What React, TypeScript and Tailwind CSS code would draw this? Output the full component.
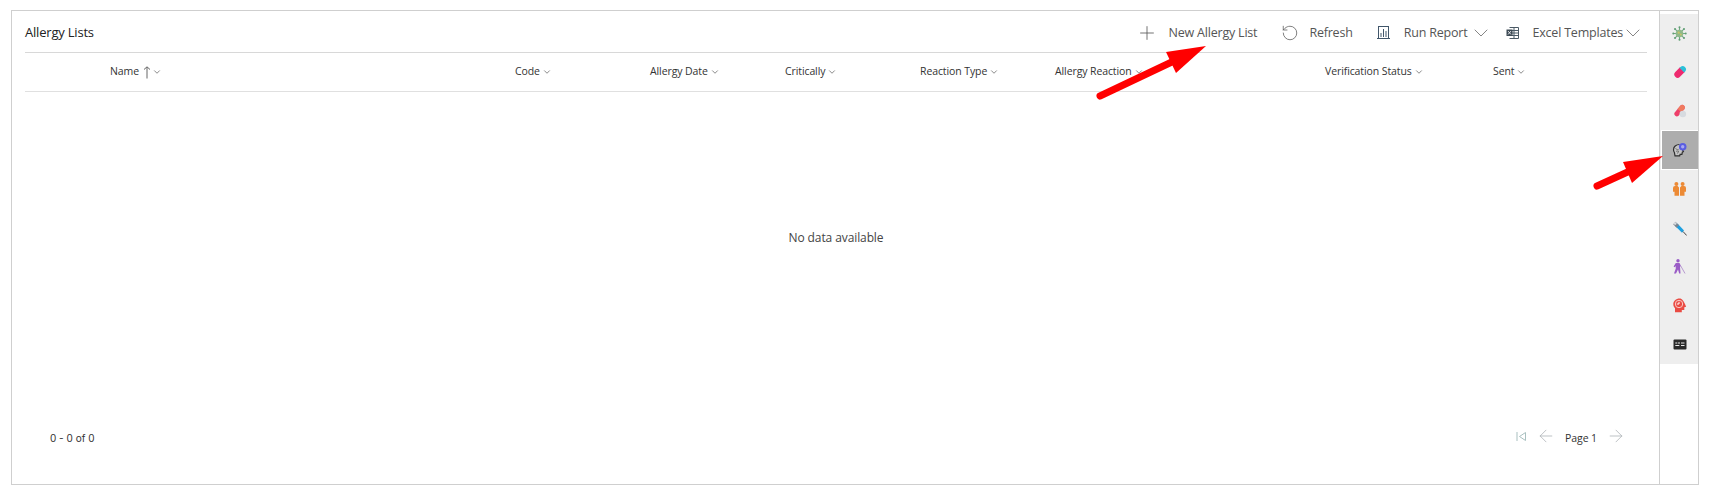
import { ArrowLeft, ArrowRight, ChevronDown, Plus, RotateCw } from "lucide-react";

const COLUMNS = [
  { label: "Code", width: "w-[135px]" },
  { label: "Allergy Date", width: "w-[135px]" },
  { label: "Critically", width: "w-[135px]" },
  { label: "Reaction Type", width: "w-[135px]" },
  { label: "Allergy Reaction", width: "w-[270px]" },
  { label: "Verification Status", width: "w-[168px]" },
  { label: "Sent", width: "w-[100px]" },
];

// ─── Sidebar icons ────────────────────────────────────────────────────────────

function VirusIcon() {
  return (
    <svg width="15" height="15" viewBox="0 0 15 15">
      <g stroke="#6fa883" strokeWidth="1.100">
        <path d="M7.500 1v13M1 7.500h13M2.900 2.900l9.200 9.200M12.100 2.900l-9.200 9.200" />
      </g>
      <g fill="#5f9e73">
        <circle cx="7.500" cy="1.300" r="1" />
        <circle cx="7.500" cy="13.700" r="1" />
        <circle cx="1.300" cy="7.500" r="1" />
        <circle cx="13.700" cy="7.500" r="1" />
        <circle cx="3" cy="3" r="1" />
        <circle cx="12" cy="3" r="1" />
        <circle cx="3" cy="12" r="1" />
        <circle cx="12" cy="12" r="1" />
      </g>
      <circle cx="7.500" cy="7.500" r="3.800" fill="#8fb98a" />
      <circle cx="6.700" cy="6.700" r="1.100" fill="#c9c46a" />
      <circle cx="8.800" cy="8.500" r=".9" fill="#c9c46a" />
    </svg>
  );
}

function PillIcon() {
  return (
    <svg width="14" height="14" viewBox="0 0 14 14">
      <path d="M7 2.300 L11.700 7 L7 11.700 A3.300 3.300 0 0 1 2.300 7 Z" fill="#ee2a6f" />
      <path d="M6.500 2.800 L7.500 1.900 A3.300 3.300 0 0 1 12.200 6.500 L11.200 7.500 Z" fill="#2bc0d8" />
    </svg>
  );
}

function PillsIcon() {
  return (
    <svg width="14" height="15" viewBox="0 0 14 15">
      <path d="M1.300 10 L7.500 2.400 A2.700 2.700 0 0 1 11.500 5.900 L5.300 13 A2.700 2.700 0 0 1 1.300 10 Z" fill="#ee3f6a" />
      <path d="M4.500 6 L7.500 2.400 A2.700 2.700 0 0 1 11.500 5.900 L8.500 9.200 Z" fill="#ef7a5f" />
      <circle cx="9.800" cy="11" r="3.300" fill="#d7dbe0" />
    </svg>
  );
}

function HeadIcon() {
  return (
    <svg width="16" height="16" viewBox="0 0 16 16">
      <path
        d="M7.500 2.500C4 2.500 1.500 4.800 1.500 7.700c0 1.300.3 1.900.9 2.800l.6 3.300h4.700l.4-1.500h1.800l.5-2.300 1-.3-1-2.500"
        fill="#c4c4c4"
        stroke="#2f2f2f"
        strokeWidth="1.200"
      />
      <path d="M3.500 6.500c1 .5 1.500 1.500 3 1M4 9.500c1-.7 2-.5 3 0M5.500 11.500 6.500 9.500" fill="none" stroke="#555" strokeWidth=".8" />
      <circle cx="10.700" cy="4.700" r="3.800" fill="#5a5ee0" />
      <circle cx="10.700" cy="4.700" r="1.700" fill="#a9a9ee" />
    </svg>
  );
}

function PeopleIcon() {
  return (
    <svg width="13" height="14" viewBox="0 0 13 14" fill="#ec8a35">
      <circle cx="3.400" cy="2" r="2" />
      <circle cx="9.600" cy="2" r="2" />
      <path d="M0 6a2 2 0 0 1 2-2h2.600L6 5.500v8.300H1.500V9.800H0z" />
      <path d="M13 6a2 2 0 0 0-2-2H8.400L7 5.500v8.300h4.500V9.800H13z" />
    </svg>
  );
}

function SyringeIcon() {
  return (
    <svg width="14" height="15" viewBox="0 0 14 15">
      <path d="M4.500 2.500 L11 9.500 L9 11.800 L2.200 5 Z" fill="#1ea0e0" />
      <path d="M2.500.8 L6 4.300 L3.500 6.800 L.2 3.200 Z" fill="#7d8590" />
      <circle cx="2.200" cy="2.600" r="1.300" fill="#d8dce0" />
      <path d="M10 10.500 L13.700 14.500" stroke="#444" strokeWidth="1" />
    </svg>
  );
}

function BlindIcon() {
  return (
    <svg width="13" height="15" viewBox="0 0 13 15">
      <circle cx="5" cy="1.800" r="1.700" fill="#9a5cc6" />
      <path d="M2.800 4h3.700l1.500 3-1 .7.500 6.800H6.200L5 10.500 3 14.500H1L2.800 9.500 2.600 7l-1 1.200L.6 7.500Z" fill="#9a5cc6" />
      <path d="M7.500 6.500 L12 14.500" stroke="#b79ad0" strokeWidth="1" />
    </svg>
  );
}

function BrainClockIcon() {
  return (
    <svg width="14" height="15" viewBox="0 0 14 15">
      <path
        d="M6.500 .5C3 .5.300 3 .3 6.200c0 1.900.8 3 1.700 3.900V14.300h6.800v-2.300h2.500V9.300l1.800-.5-1-2.600C10.500 3 9.300.5 6.500.5Z"
        fill="#ea4b43"
      />
      <circle cx="6" cy="6" r="3.700" fill="none" stroke="#fbd7d2" strokeWidth=".9" />
      <path d="M6 3.800V6H3.800" fill="none" stroke="#fff" strokeWidth="1" />
    </svg>
  );
}

function KeyboardIcon() {
  return (
    <svg width="14" height="11" viewBox="0 0 14 11">
      <rect x=".5" y=".5" width="13" height="10" rx="1" fill="#2a2a2a" />
      <path d="M2.300 4h2M5 4h2M8 4h3.500M2.300 6.500h4M8 6.500h3.500" stroke="#e8e8e8" strokeWidth="1.200" />
    </svg>
  );
}

// ─── Toolbar icons ────────────────────────────────────────────────────────────

function ReportIcon() {
  return (
    <svg width="13" height="14" viewBox="0 0 13 14" fill="none" stroke="#41566a" strokeWidth="1">
      <rect x="1.500" y=".5" width="10" height="12" />
      <path d="M0 12.500h13M4 11V7M6.500 11V3M9 11V5" />
    </svg>
  );
}

function ExcelIcon() {
  return (
    <svg width="13" height="12" viewBox="0 0 13 12" fill="none" stroke="#4b5a66" strokeWidth="1">
      <path d="M3.500 .5h9v11h-9M3.500 3.500h9M3.500 6h9M3.500 8.500h9M8 .5v11" />
      <rect x=".5" y="2.500" width="6" height="6.500" fill="#3d4a55" stroke="none" />
      <path d="M2 4l3 3.500M5 4 2 7.500" stroke="#fff" strokeWidth=".8" />
    </svg>
  );
}

const SIDE_ICONS = [
  { key: "virus", node: <VirusIcon /> },
  { key: "pill", node: <PillIcon /> },
  { key: "pills", node: <PillsIcon /> },
  { key: "head", node: <HeadIcon />, active: true },
  { key: "people", node: <PeopleIcon /> },
  { key: "syringe", node: <SyringeIcon /> },
  { key: "blind", node: <BlindIcon /> },
  { key: "brain", node: <BrainClockIcon /> },
  { key: "keyboard", node: <KeyboardIcon /> },
];

export default function App() {
  return (
    <div className="relative h-[491px] w-[1710px] overflow-hidden bg-white pl-[11px] pt-[10px] font-['Open_Sans',sans-serif] text-[#333]">
      <div className="flex h-[475px] w-[1688px] border border-[#cfcfcf]">
        {/* Main panel */}
        <div className="flex w-[1648px] flex-col border-r border-[#cfcfcf] pl-[13px] pr-[12px]">
          <div className="flex h-[42px] shrink-0 items-center justify-between border-b border-[#d8d8d8] pt-[3px]">
            <span className="text-[13px] tracking-[-0.2px] text-[#222]">Allergy Lists</span>
            <div className="flex items-center text-[12.5px] tracking-[-0.2px] text-[#555]">
              <Plus className="h-[22px] w-[22px] text-[#555]" strokeWidth={0.9} />
              <span className="ml-[10px]">New Allergy List</span>
              <RotateCw className="ml-[24px] h-[18px] w-[18px] -scale-x-100 text-[#555]" strokeWidth={1} />
              <span className="ml-[10px]">Refresh</span>
              <span className="ml-[24px] flex"><ReportIcon /></span>
              <span className="ml-[14px]">Run Report</span>
              <ChevronDown className="ml-[2px] h-[24px] w-[24px] text-[#666]" strokeWidth={0.8} />
              <span className="ml-[13px] flex"><ExcelIcon /></span>
              <span className="ml-[13px]">Excel Templates</span>
              <ChevronDown className="mr-[2px] -ml-[2px] h-[24px] w-[24px] text-[#666]" strokeWidth={0.8} />
            </div>
          </div>

          <div className="flex h-[39px] shrink-0 items-center border-b border-[#e0e0e0] pl-[85px] text-[10.5px] tracking-[-0.1px] text-[#333]">
            <div className="flex w-[405px] items-center">
              <span>Name</span>
              <svg className="ml-[4px]" width="8" height="13" viewBox="0 0 8 13" fill="none" stroke="#666" strokeWidth="1">
                <path d="M4 12.500V1M1 3.500 4 .8l3 2.700" />
              </svg>
              <ChevronDown className="ml-[1px] h-[10px] w-[10px] text-[#444]" strokeWidth={1.5} />
            </div>
            {COLUMNS.map((col) => (
              <div key={col.label} className={`flex items-center ${col.width}`}>
                <span>{col.label}</span>
                <ChevronDown className="ml-[2px] h-[10px] w-[10px] text-[#444]" strokeWidth={1.5} />
              </div>
            ))}
          </div>

          <div className="flex h-[292px] shrink-0 items-center justify-center text-[12px] tracking-[-0.1px] text-[#444]">
            No data available
          </div>

          <div className="flex flex-1 items-start justify-between pl-[25px] pr-[21px] pt-[47px] text-[10px] text-[#333]">
            <span className="font-['Inter',sans-serif] text-[10px]">0 - 0 of 0</span>
            <div className="-mt-[5px] flex items-center text-[#a8adb1]">
              <svg width="11" height="11" viewBox="0 0 11 11" fill="none" stroke="#a9c0c0" strokeWidth="1">
                <path d="M1 1v9M9.500 1.500v8L3.500 5.500z" />
              </svg>
              <ArrowLeft className="ml-[9px] h-[20px] w-[20px]" strokeWidth={0.9} />
              <span className="ml-[9px] mt-[5px] text-[10.5px] tracking-[-0.1px] text-[#333]">Page 1</span>
              <ArrowRight className="ml-[9px] h-[20px] w-[20px]" strokeWidth={0.9} />
            </div>
          </div>
        </div>

        {/* Right icon rail */}
        <div className="flex-1 pt-[3px]">
          <div className="flex h-[350px] flex-col bg-[#eeeeee] pl-[1px]">
            {SIDE_ICONS.map((item) =>
              item.active ? (
                <div key={item.key} className="flex h-[40px] items-center justify-center border-y border-l border-white bg-[#adadad]">
                  {item.node}
                </div>
              ) : (
                <div key={item.key} className="flex h-[38.7px] items-center justify-center">
                  {item.node}
                </div>
              ),
            )}
          </div>
        </div>
      </div>

      {/* Annotation arrows */}
      <svg className="pointer-events-none absolute left-[1090px] top-[40px]" width="130" height="70" viewBox="1090 40 130 70">
        <path d="M1100 96 L1176 60" stroke="#ff0000" strokeWidth="7" strokeLinecap="round" />
        <path d="M1206 46 L1166 52 L1176 73 Z" fill="#ff0000" />
      </svg>
      <svg className="pointer-events-none absolute left-[1590px] top-[145px]" width="80" height="50" viewBox="1590 145 80 50">
        <path d="M1597 186 L1632 170" stroke="#ff0000" strokeWidth="7" strokeLinecap="round" />
        <path d="M1663 156 L1623 162 L1632 183 Z" fill="#ff0000" />
      </svg>
    </div>
  );
}
